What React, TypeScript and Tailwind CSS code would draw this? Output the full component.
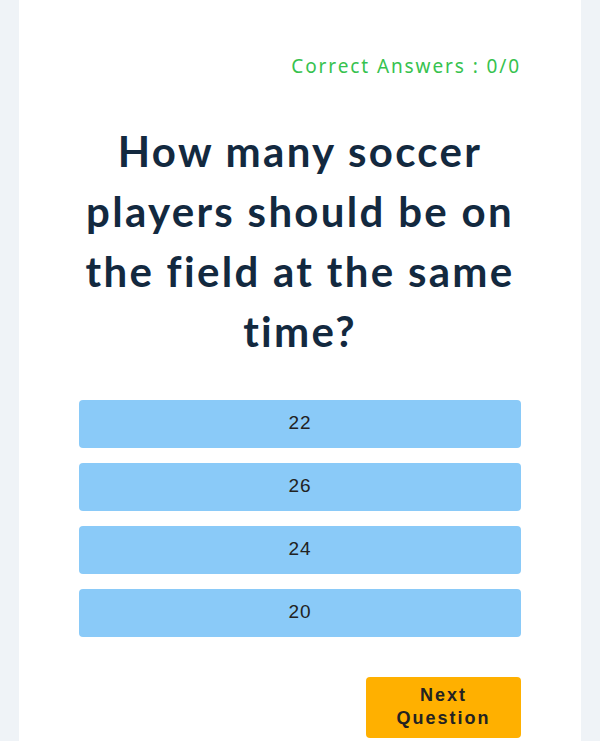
const answers = ['22', '26', '24', '20']

export default function App() {
  return (
    <div className="min-h-screen bg-[#eff3f7] flex justify-center">
      <div className="w-[562px] bg-white px-[60px] pt-[52px] pb-[10px]">
        <p className="text-right text-[19px] tracking-[1.9px] text-[#36c24e] font-['Noto_Sans',sans-serif]">
          Correct Answers : 0/0
        </p>

        <h1 className="mt-[40px] text-center text-[42px] leading-[60px] font-bold tracking-[2.3px] text-[#13293f] font-['Lato',sans-serif]">
          How many soccer players should be on the field at the same time?
        </h1>

        <div className="mt-[39px] flex flex-col gap-[15px]">
          {answers.map((a) => (
            <button
              key={a}
              className="h-[48px] w-full rounded-[4px] bg-[#8acaf8] text-[19px] tracking-[1px] text-[#222] font-['Liberation_Sans',Arial,sans-serif]"
            >
              {a}
            </button>
          ))}
        </div>

        <div className="mt-[40px] flex justify-end">
          <button className="w-[155px] h-[61px] rounded-[4px] bg-[#ffb000] text-[18px] leading-[23px] font-bold tracking-[2px] text-[#222] font-['Liberation_Sans',Arial,sans-serif]">
            Next
            <br />
            Question
          </button>
        </div>
      </div>
    </div>
  )
}
